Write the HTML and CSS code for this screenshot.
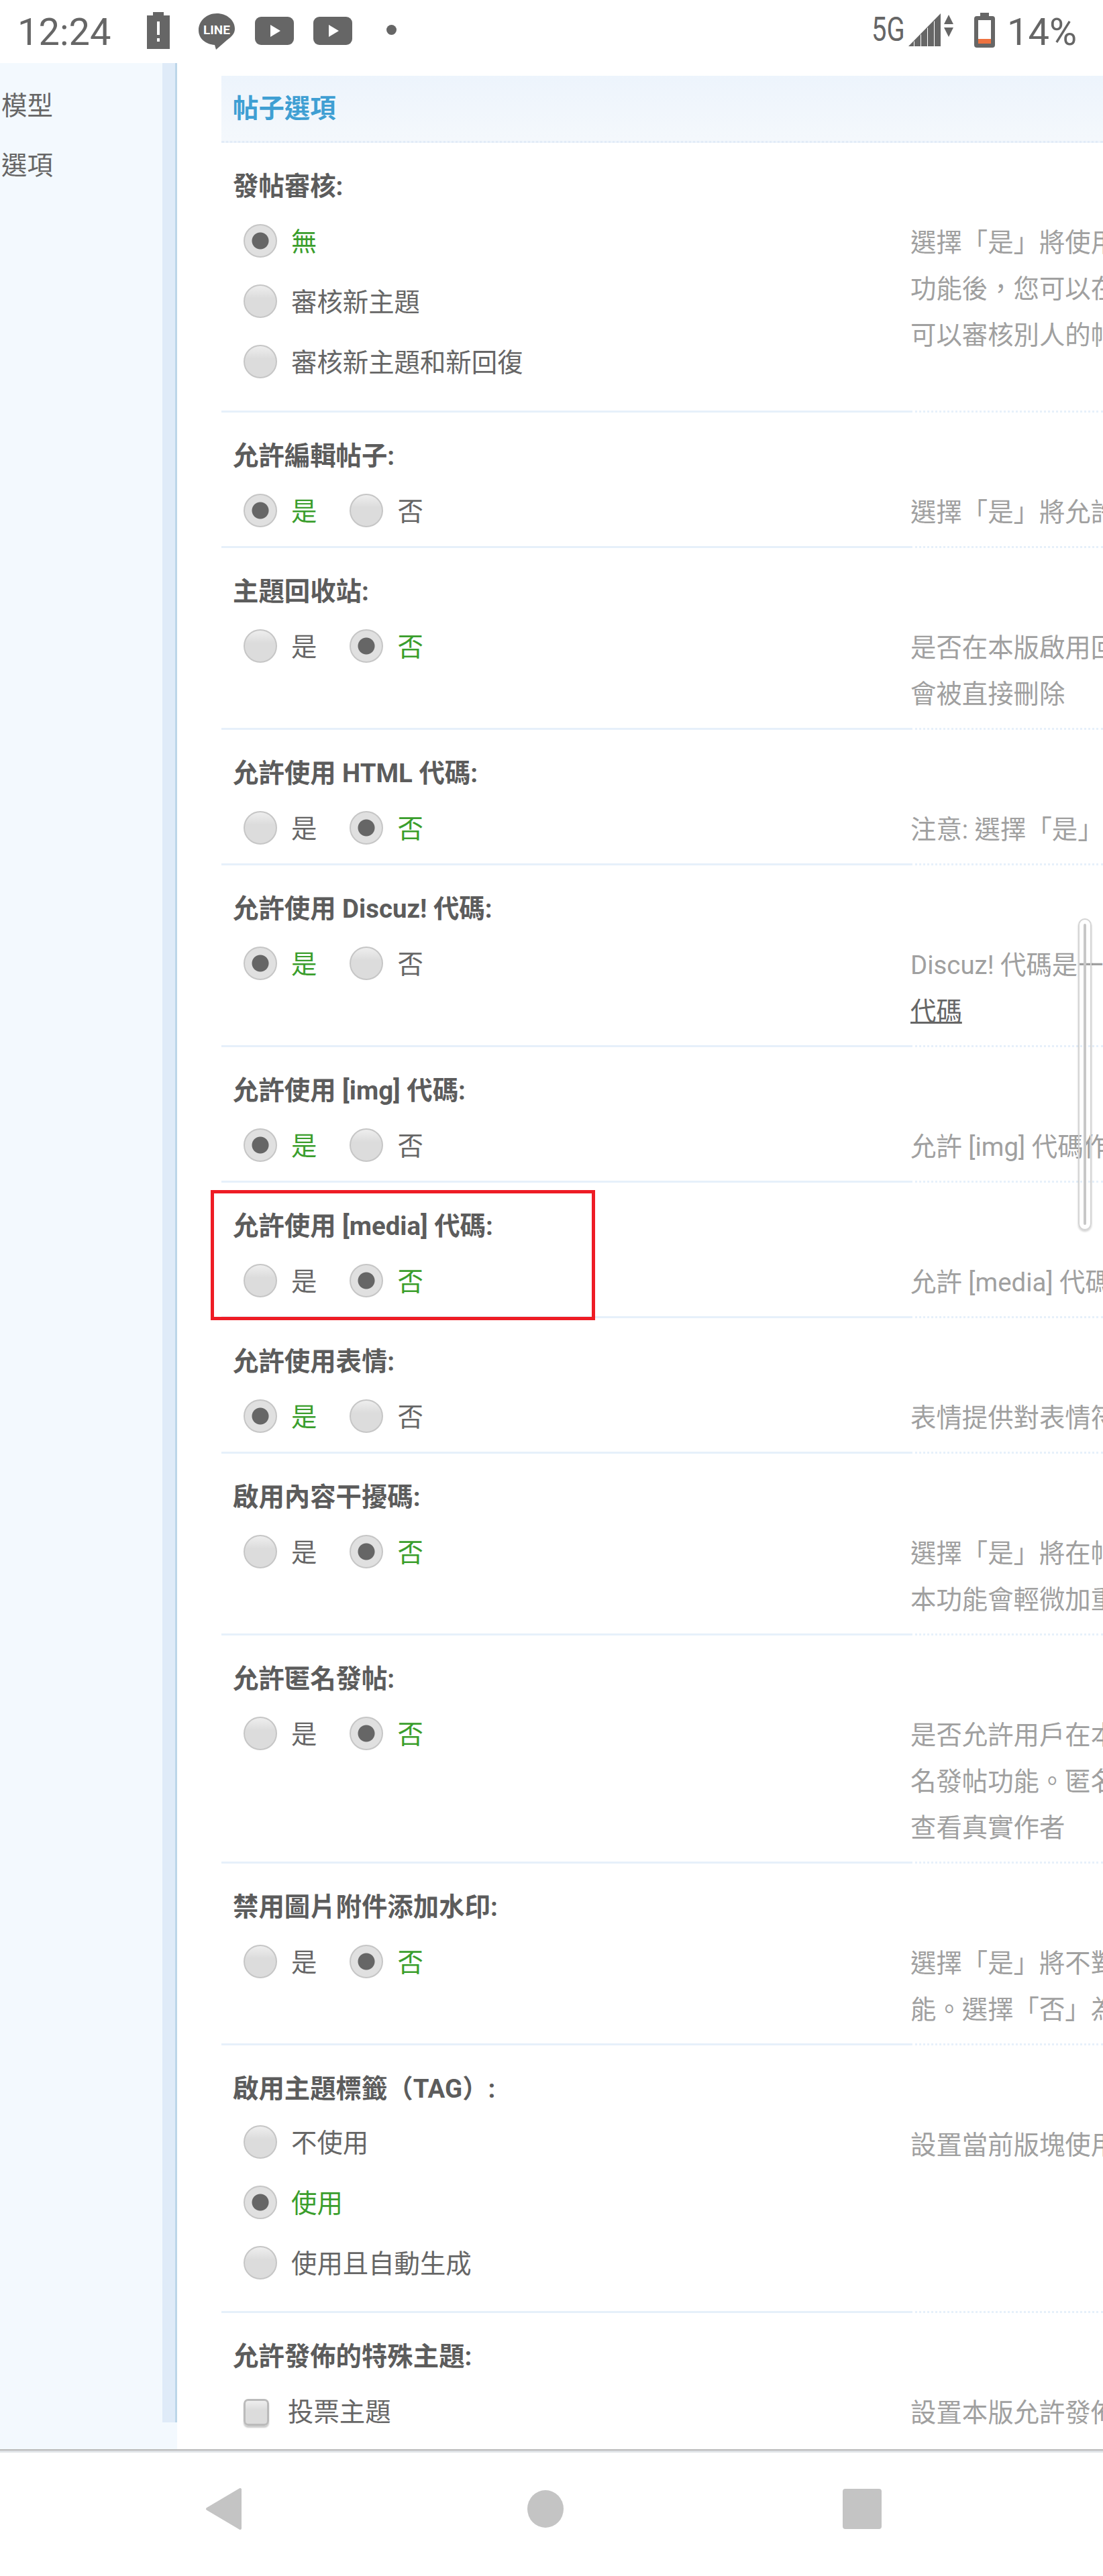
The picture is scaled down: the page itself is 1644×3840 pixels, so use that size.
FILE: index.html
```html
<!DOCTYPE html>
<html lang="zh-Hant">
<head>
    <meta charset="UTF-8">
    <meta name="viewport" content="width=device-width, initial-scale=1.0">
    <title>帖子選項</title>
    <link rel="stylesheet" href="styles.css">
</head>
<body>
    <div class="statusbar">
        <span class="clock">12:24</span>
        <svg class="ic-alert" width="34" height="55" viewBox="0 0 34 55"><path d="M9 0h16v5h9v50H0V5h9z" fill="#666"/><path d="M15 14h4v20h-4zM15 39h4v5h-4z" fill="#fff"/></svg>
        <svg class="ic-line" width="54" height="54" viewBox="0 0 54 54"><path d="M27 0C12 0 0 11 0 25c0 13 11 21 24 22l2 7 16-14c7-5 12-10 12-17C54 10 42 0 27 0z" fill="#666"/><text x="27" y="31" class="line-text">LINE</text></svg>
        <svg class="ic-play" width="58" height="42" viewBox="0 0 58 42"><rect width="58" height="42" rx="9" fill="#666"/><path d="M23 12l15 9-15 9z" fill="#fff"/></svg>
        <svg class="ic-play" width="58" height="42" viewBox="0 0 58 42"><rect width="58" height="42" rx="9" fill="#666"/><path d="M23 12l15 9-15 9z" fill="#fff"/></svg>
        <span class="dot"></span>
        <span class="net">5G</span>
        <svg class="ic-signal" width="68" height="50" viewBox="0 0 68 50"><path d="M0 49L48 0v49h-9V11l-1 1v37h-9V21l-1 1v27h-9V31l-1 1v17h-9V41l-1 1v7z" fill="#666"/><path d="M60 2l7 14H53zM53 21h14l-7 14z" fill="#666"/></svg>
        <svg class="ic-batt" width="31" height="52" viewBox="0 0 31 52"><path d="M9 0h13v5h5a4 4 0 0 1 4 4v39a4 4 0 0 1-4 4H4a4 4 0 0 1-4-4V9a4 4 0 0 1 4-4h5z" fill="#666"/><rect x="6" y="11" width="19" height="35" fill="#fff"/><rect x="6" y="39" width="19" height="7" fill="#ee7240"/></svg>
        <span class="percent">14%</span>
    </div>

    <div class="page">
        <div class="sidebar">
            <div class="menu">
                <a href="#">模型</a>
                <a href="#">選項</a>
            </div>
            <div class="band"></div>
        </div>

        <div class="main">
            <h3 class="section-title">帖子選項</h3>

            <div class="row">
                <div class="label">發帖審核:</div>
                <div class="cols">
                    <ul class="choices stacked">
                        <li class="on"><input type="radio" name="r1" checked>無</li>
                        <li><input type="radio" name="r1">審核新主題</li>
                        <li><input type="radio" name="r1">審核新主題和新回復</li>
                    </ul>
                    <div class="hint">選擇「是」將使用<br>功能後&#xFF0C;您可以在<br>可以審核別人的帖</div>
                </div>
            </div>

            <div class="row">
                <div class="label">允許編輯帖子:</div>
                <div class="cols">
                    <ul class="choices">
                        <li class="on"><input type="radio" name="r2" checked>是</li>
                        <li><input type="radio" name="r2">否</li>
                    </ul>
                    <div class="hint">選擇「是」將允許</div>
                </div>
            </div>

            <div class="row">
                <div class="label">主題回收站:</div>
                <div class="cols">
                    <ul class="choices">
                        <li><input type="radio" name="r3">是</li>
                        <li class="on"><input type="radio" name="r3" checked>否</li>
                    </ul>
                    <div class="hint">是否在本版啟用回<br>會被直接刪除</div>
                </div>
            </div>

            <div class="row">
                <div class="label">允許使用 HTML 代碼:</div>
                <div class="cols">
                    <ul class="choices">
                        <li><input type="radio" name="r4">是</li>
                        <li class="on"><input type="radio" name="r4" checked>否</li>
                    </ul>
                    <div class="hint">注意: 選擇「是」</div>
                </div>
            </div>

            <div class="row">
                <div class="label">允許使用 Discuz! 代碼:</div>
                <div class="cols">
                    <ul class="choices">
                        <li class="on"><input type="radio" name="r5" checked>是</li>
                        <li><input type="radio" name="r5">否</li>
                    </ul>
                    <div class="hint">Discuz! 代碼是一<br><a href="#">代碼</a></div>
                </div>
            </div>

            <div class="row">
                <div class="label">允許使用 [img] 代碼:</div>
                <div class="cols">
                    <ul class="choices">
                        <li class="on"><input type="radio" name="r6" checked>是</li>
                        <li><input type="radio" name="r6">否</li>
                    </ul>
                    <div class="hint">允許 [img] 代碼作</div>
                </div>
            </div>

            <div class="row">
                <div class="label">允許使用 [media] 代碼:</div>
                <div class="cols">
                    <ul class="choices">
                        <li><input type="radio" name="r7">是</li>
                        <li class="on"><input type="radio" name="r7" checked>否</li>
                    </ul>
                    <div class="hint">允許 [media] 代碼</div>
                </div>
            </div>

            <div class="row">
                <div class="label">允許使用表情:</div>
                <div class="cols">
                    <ul class="choices">
                        <li class="on"><input type="radio" name="r8" checked>是</li>
                        <li><input type="radio" name="r8">否</li>
                    </ul>
                    <div class="hint">表情提供對表情符</div>
                </div>
            </div>

            <div class="row">
                <div class="label">啟用內容干擾碼:</div>
                <div class="cols">
                    <ul class="choices">
                        <li><input type="radio" name="r9">是</li>
                        <li class="on"><input type="radio" name="r9" checked>否</li>
                    </ul>
                    <div class="hint">選擇「是」將在帖<br>本功能會輕微加重</div>
                </div>
            </div>

            <div class="row">
                <div class="label">允許匿名發帖:</div>
                <div class="cols">
                    <ul class="choices">
                        <li><input type="radio" name="r10">是</li>
                        <li class="on"><input type="radio" name="r10" checked>否</li>
                    </ul>
                    <div class="hint">是否允許用戶在本<br>名發帖功能。匿名<br>查看真實作者</div>
                </div>
            </div>

            <div class="row">
                <div class="label">禁用圖片附件添加水印:</div>
                <div class="cols">
                    <ul class="choices">
                        <li><input type="radio" name="r11">是</li>
                        <li class="on"><input type="radio" name="r11" checked>否</li>
                    </ul>
                    <div class="hint">選擇「是」將不對<br>能。選擇「否」為</div>
                </div>
            </div>

            <div class="row">
                <div class="label">啟用主題標籤&#xFF08;TAG&#xFF09;:</div>
                <div class="cols">
                    <ul class="choices stacked tag">
                        <li><input type="radio" name="r12">不使用</li>
                        <li class="on"><input type="radio" name="r12" checked>使用</li>
                        <li><input type="radio" name="r12">使用且自動生成</li>
                    </ul>
                    <div class="hint">設置當前版塊使用</div>
                </div>
            </div>

            <div class="row">
                <div class="label">允許發佈的特殊主題:</div>
                <div class="cols">
                    <ul class="choices stacked">
                        <li class="check"><input type="checkbox">投票主題</li>
                    </ul>
                    <div class="hint">設置本版允許發佈</div>
                </div>
            </div>
        </div>

        <div class="highlight"></div>
        <div class="scrollthumb"><span></span></div>
    </div>

    <div class="navbar">
        <svg class="nav-back" width="54" height="64" viewBox="0 0 54 64"><path d="M52 3v58L3 32z" fill="#c4c4c4" stroke="#c4c4c4" stroke-width="4" stroke-linejoin="round"/></svg>
        <span class="nav-home"></span>
        <span class="nav-recent"></span>
    </div>
</body>
</html>
```

FILE: styles.css
```css
* {
    box-sizing: border-box;
}
html, body {
    margin: 0;
    padding: 0;
    height: 3840px;
    overflow: hidden;
    background: #fff;
}
body {
    display: flex;
    flex-direction: column;
    font-family: Roboto, "Noto Sans CJK TC", sans-serif;
    font-size: 38.4px;
    color: #666;
}

/* status bar */
.statusbar {
    flex: none;
    height: 94px;
    display: flex;
    align-items: flex-start;
    padding-left: 26px;
}
.clock {
    font-size: 56px;
    line-height: 56px;
    margin-top: 20px;
    width: 139px;
}
.ic-alert {
    margin: 18px 0 0 54px;
}
.ic-line {
    margin: 20px 0 0 43px;
}
.line-text {
    font-family: Roboto, sans-serif;
    font-size: 19px;
    font-weight: 700;
    fill: #fff;
    text-anchor: middle;
}
.ic-play {
    margin: 25px 0 0 30px;
}
.ic-play + .ic-play {
    margin-left: 29px;
}
.dot {
    width: 15px;
    height: 15px;
    border-radius: 50%;
    background: #666;
    margin: 37px 0 0 51px;
}
.net {
    font-size: 50px;
    line-height: 50px;
    margin: 19px 0 0 auto;
    width: 46px;
    transform: scaleX(.8);
    transform-origin: left;
}
.ic-signal {
    margin: 20px 0 0 9px;
}
.ic-batt {
    margin: 19px 0 0 30px;
}
.percent {
    font-size: 56px;
    line-height: 56px;
    margin: 20px 39px 0 18px;
}

/* page */
.page {
    position: relative;
    flex: none;
    height: 3557px;
    display: flex;
    overflow: hidden;
}
.sidebar {
    flex: none;
    width: 264px;
    display: flex;
    background: #f3f9fe;
}
.menu {
    flex: 1;
    padding: 42px 0 0 2px;
}
.menu a {
    display: block;
    height: 89px;
    line-height: 44px;
    color: #666;
    text-decoration: none;
}
.band {
    flex: none;
    width: 22px;
    height: 3517px;
    background: #dfebf8;
    border-right: 3px solid #bdd6e9;
}
.main {
    flex: none;
    width: 1314px;
    margin: 19px 0 0 66px;
}
.section-title {
    margin: 0;
    height: 100px;
    padding-left: 17px;
    font-size: 38.4px;
    font-weight: 700;
    line-height: 97px;
    color: #3f9fd3;
    background: linear-gradient(#edf4fc, #f4f8fc);
    border-bottom: 3px dotted #e2ecf7;
}

/* setting rows */
.label {
    padding: 30px 0 0 17px;
    height: 98px;
    line-height: 70px;
    font-weight: 700;
    color: #5c5c5c;
}
.cols {
    display: flex;
}
.choices {
    flex: none;
    width: 1027px;
    margin: 0;
    padding: 14px 0 17px 33px;
    list-style: none;
    display: flex;
    border-bottom: 3px solid #e6f0fa;
}
.choices li {
    display: flex;
    align-items: center;
    height: 70px;
    padding-bottom: 6px;
    margin-right: 49px;
}
.choices.stacked {
    display: block;
}
.choices.stacked li {
    margin: 0 0 20px;
}
.choices.tag {
    padding: 12px 0 16px 33px;
}
.choices li.on {
    color: #3a9e2c;
}
.choices input {
    appearance: none;
    flex: none;
    width: 50px;
    height: 50px;
    margin: 4px 21px 0 0;
    border: 2px solid #c6c6c6;
    border-radius: 50%;
    background: linear-gradient(#eeeeee, #dcdcdc 40%);
}
.choices input:checked {
    background: radial-gradient(circle, #666 0, #666 12px, #e0e0e0 13px);
}
.choices .check {
    margin-left: 3px;
}
.choices input[type="checkbox"] {
    width: 38px;
    height: 40px;
    margin: 8px 28px 0 0;
    border: 3px solid #bbb;
    border-radius: 7px;
    box-shadow: 0 3px 2px #ccc;
}
.hint {
    flex: 1;
    white-space: nowrap;
    overflow: hidden;
    padding: 16px 0;
    line-height: 69px;
    color: #a0a0a0;
    border-bottom: 3px dotted #e6f0fa;
}
.hint a {
    color: #666;
}

/* over the content */
.highlight {
    position: absolute;
    left: 314px;
    top: 1680px;
    width: 573px;
    height: 194px;
    border: 5px solid #ee1c25;
}
.scrollthumb {
    position: absolute;
    left: 1607px;
    top: 1275px;
    width: 20px;
    height: 465px;
    padding: 6px;
    border: 2px solid #d4d4d4;
    border-radius: 10px;
    box-shadow: 0 2px 3px rgba(0, 0, 0, .2);
}
.scrollthumb span {
    display: block;
    height: 100%;
    border: 2px solid #c8c8c8;
    border-radius: 4px;
}

/* nav bar */
.navbar {
    flex: none;
    height: 189px;
    display: flex;
    align-items: center;
    padding: 0 0 14px 306px;
    border-top: 2px solid #b9b9b9;
    box-shadow: inset 0 3px 0 #dfe2e6;
}
.nav-home {
    width: 54px;
    height: 56px;
    margin-left: 426px;
    border-radius: 50%;
    background: #c4c4c4;
}
.nav-recent {
    width: 58px;
    height: 60px;
    margin-left: 416px;
    border-radius: 4px;
    background: #c4c4c4;
}
```
